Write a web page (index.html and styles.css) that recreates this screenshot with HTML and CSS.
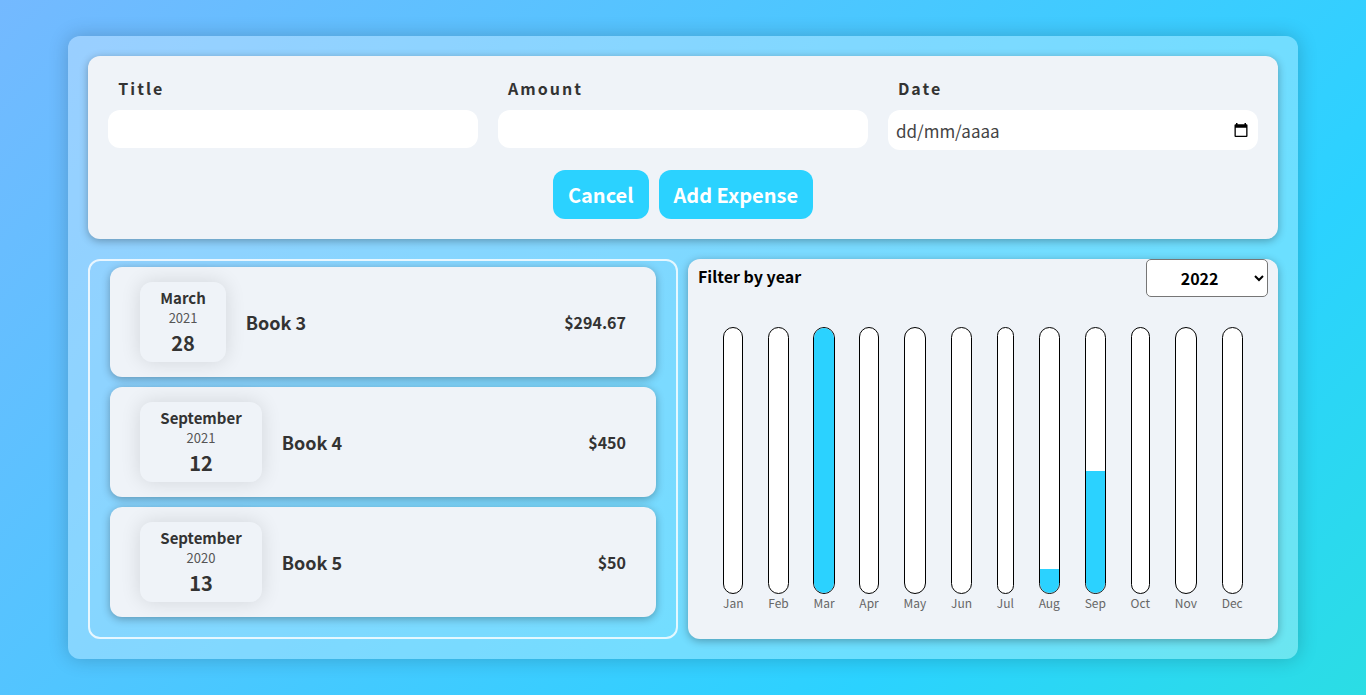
FILE: index.html
```html
<!DOCTYPE html>
<html lang="en">
<head>
<meta charset="utf-8">
<title>Expenses</title>
<link rel="stylesheet" href="styles.css">
</head>
<body>
<main class="app">
  <form class="panel expense-form">
    <div class="fields">
      <div class="field">
        <label for="title">Title</label>
        <input id="title" type="text">
      </div>
      <div class="field">
        <label for="amount">Amount</label>
        <input id="amount" type="text" inputmode="decimal">
      </div>
      <div class="field">
        <label for="date">Date</label>
        <div class="date-box">
          <input id="date" type="text" placeholder="dd/mm/aaaa">
          <button class="date-picker" type="button" aria-label="Open calendar">
            <svg viewBox="0 0 14 15" width="14" height="15"><path fill="#000" fill-rule="evenodd" d="M2 0h1.500v1.300h7V0H12v1.300h.5a1 1 0 0 1 1 1V13a1 1 0 0 1-1 1h-11a1 1 0 0 1-1-1V2.300a1 1 0 0 1 1-1H2zM1.800 4.800v8h10.400v-8z"/></svg>
          </button>
        </div>
      </div>
    </div>
    <div class="actions">
      <button class="action" type="button">Cancel</button>
      <button class="action" type="submit">Add Expense</button>
    </div>
  </form>
  <div class="columns">
    <ul class="expenses">
      <li class="panel expense">
        <div class="date"><span class="month">March</span><span class="year">2021</span><span class="day">28</span></div>
        <h2 class="name">Book 3</h2>
        <span class="price">$294.67</span>
      </li>
      <li class="panel expense">
        <div class="date"><span class="month">September</span><span class="year">2021</span><span class="day">12</span></div>
        <h2 class="name">Book 4</h2>
        <span class="price">$450</span>
      </li>
      <li class="panel expense">
        <div class="date"><span class="month">September</span><span class="year">2020</span><span class="day">13</span></div>
        <h2 class="name">Book 5</h2>
        <span class="price">$50</span>
      </li>
    </ul>
    <section class="panel summary">
      <div class="filter">
        <label for="year">Filter by year</label>
        <select id="year" class="year-select"><option>2022</option><option>2021</option><option>2020</option></select>
      </div>
      <div class="chart">
        <div class="bar"><div class="track"></div><span>Jan</span></div>
        <div class="bar"><div class="track"></div><span>Feb</span></div>
        <div class="bar"><div class="track"><div class="fill" style="height:100%"></div></div><span>Mar</span></div>
        <div class="bar"><div class="track"></div><span>Apr</span></div>
        <div class="bar"><div class="track"></div><span>May</span></div>
        <div class="bar"><div class="track"></div><span>Jun</span></div>
        <div class="bar"><div class="track"></div><span>Jul</span></div>
        <div class="bar"><div class="track"><div class="fill" style="height:9%"></div></div><span>Aug</span></div>
        <div class="bar"><div class="track"><div class="fill" style="height:46%"></div></div><span>Sep</span></div>
        <div class="bar"><div class="track"></div><span>Oct</span></div>
        <div class="bar"><div class="track"></div><span>Nov</span></div>
        <div class="bar"><div class="track"></div><span>Dec</span></div>
      </div>
    </section>
  </div>
</main>
</body>
</html>
```
FILE: styles.css
```css
* { box-sizing: border-box; margin: 0; padding: 0; }

body {
  display: flex;
  align-items: center;
  justify-content: center;
  min-height: 100vh;
  background: linear-gradient(135deg, #74b9ff 0%, #2bd2ff 75%, #2bdde4 100%);
  font-family: "Noto Sans CJK SC", sans-serif;
  color: #333;
}

button, input, select { font-family: inherit; border: 0; }

.app {
  display: flex;
  flex-direction: column;
  gap: 20px;
  width: 90%;
  padding: 20px;
  border-radius: 12px;
  background: rgba(255, 255, 255, 0.3);
  box-shadow: 0 0 20px rgba(0, 0, 0, 0.2);
}

.panel {
  border-radius: 12px;
  background: #eff3f8;
  box-shadow: 0 2px 8px rgba(0, 0, 0, 0.3);
}

.expense-form { padding: 20px; }

.fields {
  display: grid;
  grid-template-columns: repeat(3, 1fr);
  align-items: start;
  gap: 20px;
}

.field label {
  display: block;
  margin-bottom: 10px;
  padding-left: 10px;
  font-size: 16px;
  font-weight: 700;
  line-height: 24px;
  letter-spacing: 2px;
}

.field input {
  display: block;
  width: 100%;
  height: 38px;
  padding: 0 8px;
  border-radius: 12px;
  background: #fff;
  font-size: 17px;
  color: #333;
}

.field input::placeholder { color: #444; font-weight: 400; }

.date-box { position: relative; }
.date-box input { height: 40px; padding-right: 40px; }

.date-picker {
  position: absolute;
  top: 13px;
  right: 10px;
  display: flex;
  background: none;
}

.actions {
  display: flex;
  justify-content: center;
  gap: 10px;
  margin-top: 20px;
}

.action {
  padding: 8px 15px;
  border-radius: 12px;
  background: #2bd2ff;
  font-size: 20px;
  font-weight: 700;
  line-height: 33px;
  color: #fff;
}

.columns {
  display: grid;
  grid-template-columns: 1fr 1fr;
  gap: 10px;
}

.expenses {
  display: flex;
  flex-direction: column;
  gap: 10px;
  padding: 6px 20px 20px;
  border: 2px solid rgba(255, 255, 255, 0.8);
  border-radius: 12px;
  list-style: none;
}

.expense {
  display: flex;
  align-items: center;
  gap: 20px;
  padding: 15px 30px;
}

.date {
  display: flex;
  flex-direction: column;
  align-items: center;
  padding: 5px 20px 4px;
  border-radius: 12px;
  background: #eff3f8;
  box-shadow: 0 0 20px rgba(0, 0, 0, 0.12);
}

.month { font-size: 15px; font-weight: 700; line-height: 22px; }
.year { font-size: 13px; font-weight: 400; line-height: 18px; color: #555; }
.day { padding-top: 1px; font-size: 20px; font-weight: 700; line-height: 30px; }
.name { flex: 1; font-size: 18px; font-weight: 700; line-height: 26px; }
.price { font-size: 16px; font-weight: 700; line-height: 24px; }

.summary {
  display: flex;
  flex-direction: column;
  padding: 0 10px 27px;
}

.filter {
  display: flex;
  justify-content: space-between;
  align-items: flex-start;
  color: #000;
}

.filter label { padding-top: 5px; font-size: 16px; font-weight: 700; line-height: 24px; }

.year-select {
  width: 122px;
  height: 38px;
  padding: 0 30px;
  border: 1px solid #767676;
  border-radius: 5px;
  background: #fff;
  font-size: 16px;
  font-weight: 700;
  color: #000;
}

.chart {
  flex: 1;
  display: flex;
  justify-content: space-between;
  padding: 30px 25px 0;
}

.bar {
  display: flex;
  flex-direction: column;
  font-size: 12px;
  font-weight: 400;
  line-height: 18px;
  color: #666;
}

.track {
  flex: 1;
  display: flex;
  flex-direction: column;
  justify-content: flex-end;
  overflow: hidden;
  border: 1px solid #000;
  border-radius: 12px;
  background: #fff;
}

.fill { background: #2bd2ff; }
```
